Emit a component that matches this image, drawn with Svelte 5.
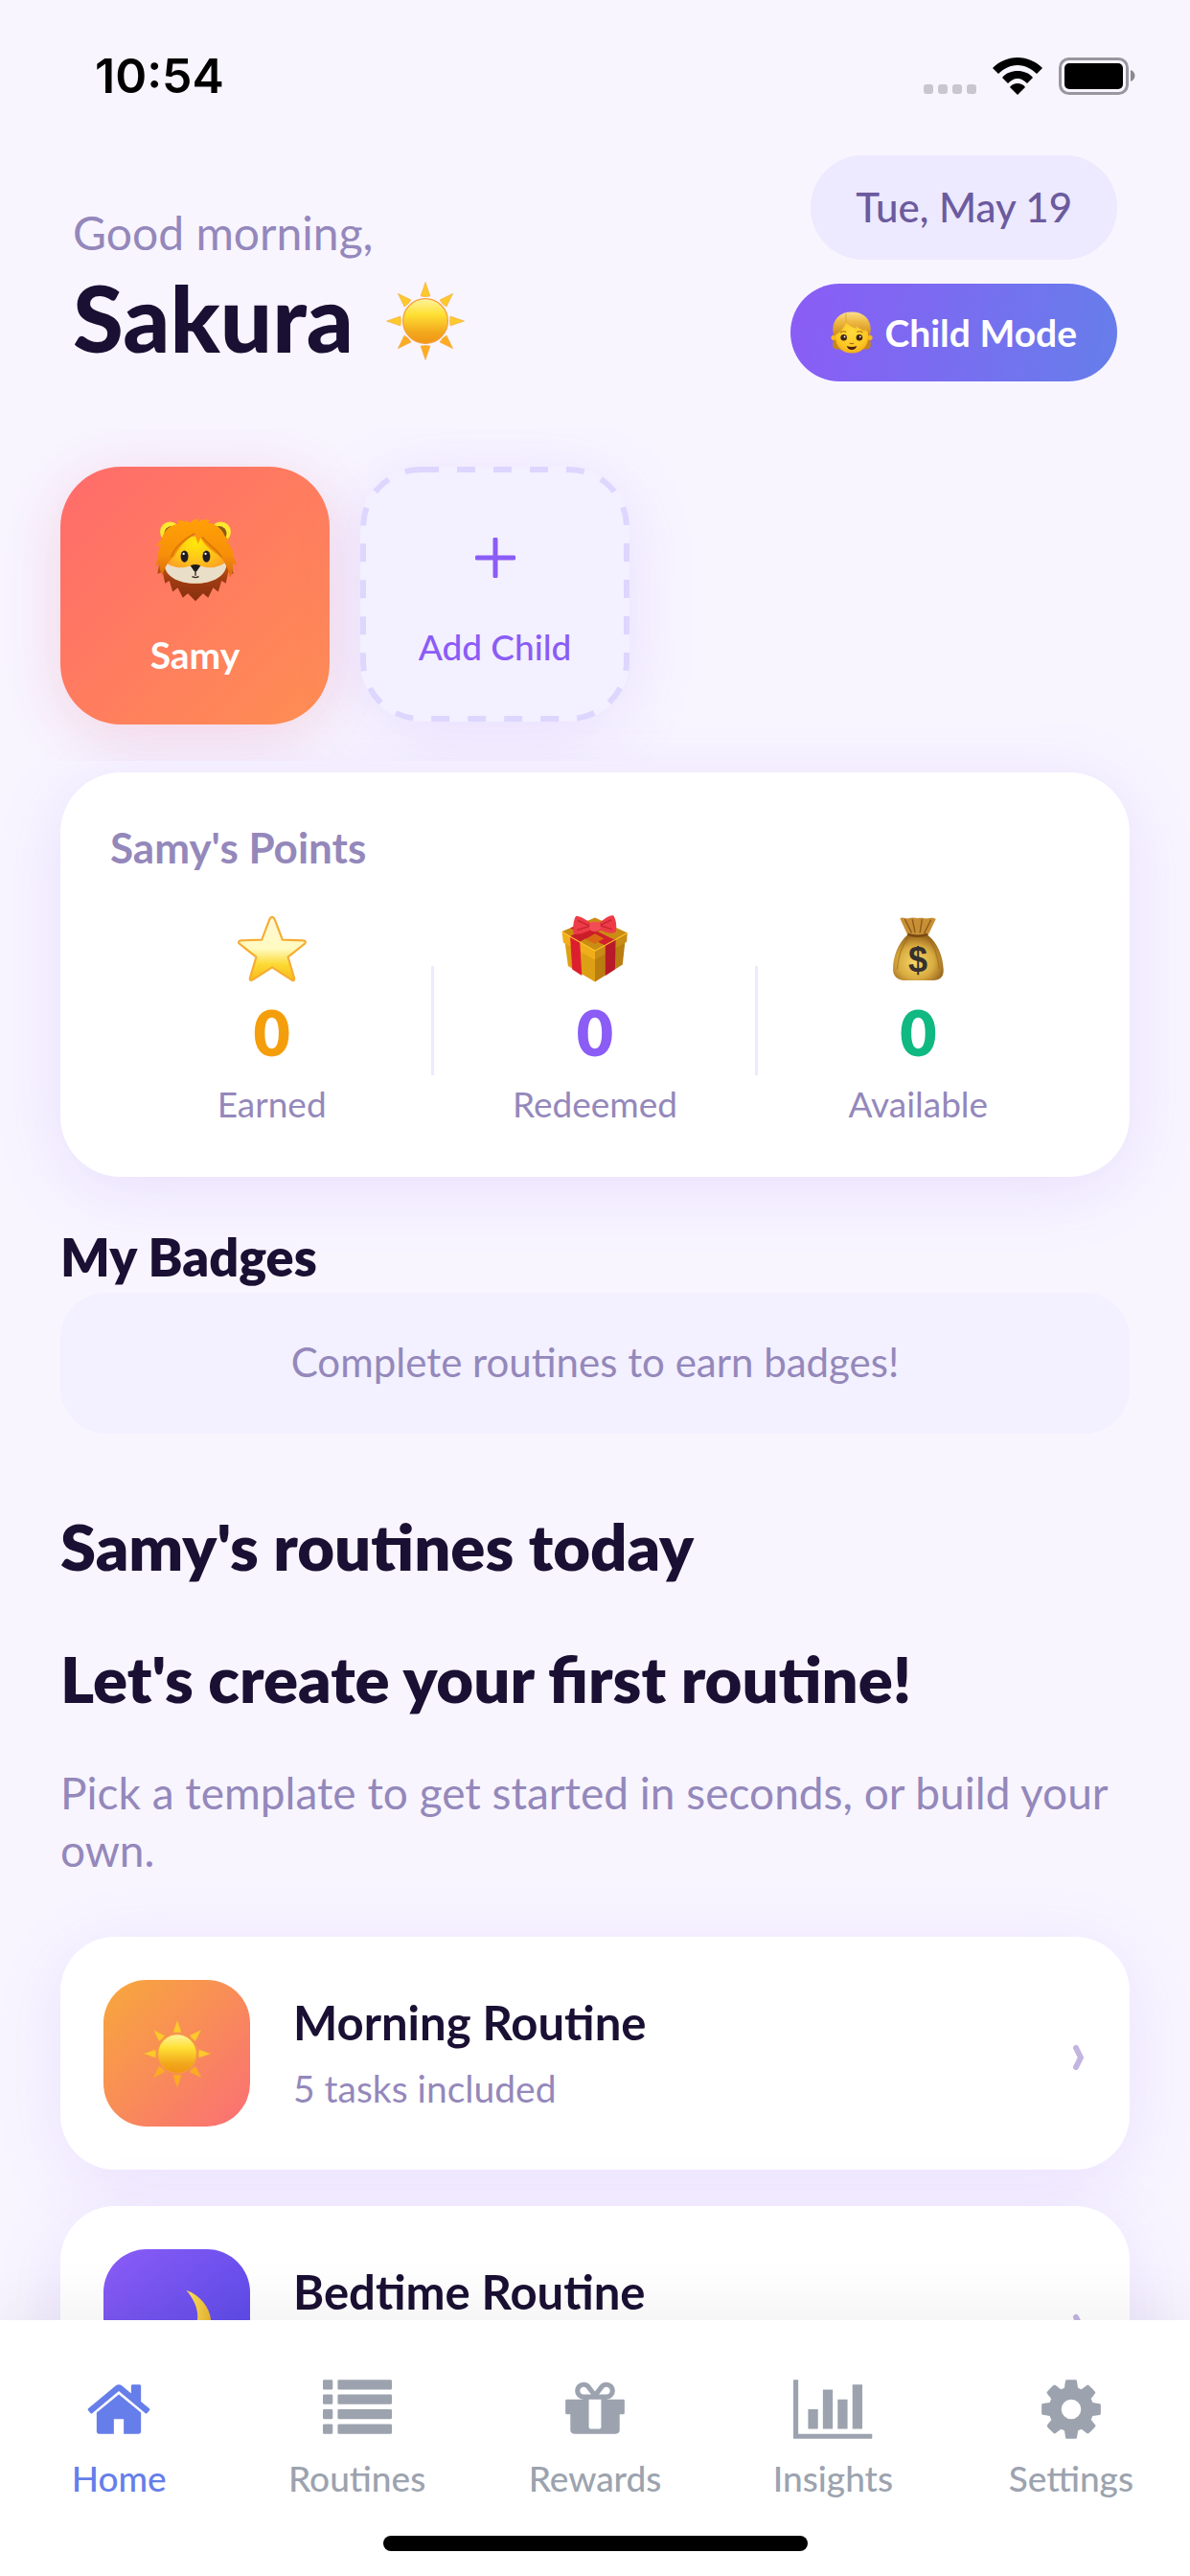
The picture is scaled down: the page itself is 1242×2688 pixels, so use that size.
<script>
  let activeTab = $state('Home');

  const stats = [
    { icon: 'star', value: 0, label: 'Earned', tone: 'amber' },
    { icon: 'gift', value: 0, label: 'Redeemed', tone: 'violet' },
    { icon: 'bag', value: 0, label: 'Available', tone: 'green' }
  ];

  const routines = [
    { icon: 'sun', title: 'Morning Routine', info: '5 tasks included', tone: 'sunrise' },
    { icon: 'moon', title: 'Bedtime Routine', info: '5 tasks included', tone: 'night' }
  ];

  const tabs = [
    {
      name: 'Home',
      width: 1792,
      path: 'M1472 992v480q0 26-19 45t-45 19h-384v-384h-256v384h-384q-26 0-45-19t-19-45v-480q0-1 .5-3t.5-3l575-474 575 474q1 2 1 6zm223-69l-62 74q-8 9-21 11h-3q-13 0-21-7l-692-577-692 577q-12 8-24 7-13-2-21-11l-62-74q-8-10-7-23.5t11-21.5l719-599q32-26 76-26t76 26l244 204v-195q0-14 9-23t23-9h192q14 0 23 9t9 23v408l219 182q10 8 11 21.5t-7 23.5z'
    },
    {
      name: 'Routines',
      width: 1792,
      path: 'M32 1280h192q32 0 32 32v192q0 32-32 32h-192q-32 0-32-32v-192q0-32 32-32zm0-384h192q32 0 32 32v192q0 32-32 32h-192q-32 0-32-32v-192q0-32 32-32zm0-384h192q32 0 32 32v192q0 32-32 32h-192q-32 0-32-32v-192q0-32 32-32zm0-384h192q32 0 32 32v192q0 32-32 32h-192q-32 0-32-32v-192q0-32 32-32zm384 1152h1344q32 0 32 32v192q0 32-32 32h-1344q-32 0-32-32v-192q0-32 32-32zm0-384h1344q32 0 32 32v192q0 32-32 32h-1344q-32 0-32-32v-192q0-32 32-32zm0-384h1344q32 0 32 32v192q0 32-32 32h-1344q-32 0-32-32v-192q0-32 32-32zm0-384h1344q32 0 32 32v192q0 32-32 32h-1344q-32 0-32-32v-192q0-32 32-32z'
    },
    {
      name: 'Rewards',
      width: 1792,
      path: 'M1056 1356v-716h-320v716q0 25 18 38.5t46 13.5h192q28 0 46-13.5t18-38.5zm-456-844h195l-126-161q-26-31-69-31-40 0-68 28t-28 68 28 68 68 28zm688-96q0-40-28-68t-68-28q-43 0-69 31l-125 161h194q40 0 68-28t28-68zm376 256v320q0 14-9 23t-23 9h-96v416q0 40-28 68t-68 28h-1088q-40 0-68-28t-28-68v-416h-96q-14 0-23-9t-9-23v-320q0-14 9-23t23-9h440q-93 0-158.5-65.5t-65.5-158.5 65.5-158.5 158.5-65.5q107 0 168 77l128 165 128-165q61-77 168-77 93 0 158.5 65.5t65.5 158.5-65.5 158.5-158.5 65.5h440q14 0 23 9t9 23z'
    },
    {
      name: 'Insights',
      width: 2048,
      path: 'M640 896v512h-256v-512h256zm384-512v1024h-256v-1024h256zm1024 1152v128h-2048v-1536h128v1408h1920zm-640-896v768h-256v-768h256zm384-384v1152h-256v-1152h256z'
    },
    {
      name: 'Settings',
      width: 1792,
      path: 'M1152 896q0-106-75-181t-181-75-181 75-75 181 75 181 181 75 181-75 75-181zm512-109v222q0 12-8 23t-20 13l-185 28q-19 54-39 91 35 50 107 138 10 12 10 25t-9 23q-27 37-99 108t-94 71q-12 0-26-9l-138-108q-44 23-91 38-16 136-29 186-7 28-36 28h-222q-14 0-24.5-8.5t-11.5-21.5l-28-184q-49-16-90-37l-141 107q-10 9-25 9-14 0-25-11-126-114-165-168-7-10-7-23 0-12 8-23 15-21 51-66.5t54-70.5q-27-50-41-99l-183-27q-13-2-21-12.5t-8-23.5v-222q0-12 8-23t19-13l186-28q14-46 39-92-40-57-107-138-10-12-10-24 0-10 9-23 26-36 98.5-107.5t94.5-71.5q13 0 26 10l138 107q44-23 91-38 16-136 29-186 7-28 36-28h222q14 0 24.5 8.5t11.5 21.5l28 184q49 16 90 37l142-107q9-9 24-9 13 0 25 10 129 119 165 170 7 8 7 22 0 12-8 23-15 21-51 66.5t-54 70.5q26 50 41 98l183 28q13 2 21 12.5t8 23.5z'
    }
  ];
</script>

{#snippet emoji(name)}
  <svg class="emoji" viewBox="0 0 100 100" aria-hidden="true">
    {#if name === 'sun'}
      {#each [0, 45, 90, 135, 180, 225, 270, 315] as angle}
        <path d="M50 5l5.500 16q-5.500 1.500-11 0z" fill={angle > 90 && angle < 270 ? '#fdab22' : '#fdc92c'} stroke="#f3a63a" stroke-width=".6" transform="rotate({angle} 50 50)" />
      {/each}
      <circle cx="50" cy="50" r="26" fill="url(#sun-fill)" stroke="#f4a03c" stroke-width="1.400" />
    {:else if name === 'moon'}
      <path d="M62 6C84 14 97 34 95 54 93 80 70 96 44 94 26 93 12 84 6 70c24 14 56 8 68-14 8-18 0-36-12-50z" fill="url(#moon-fill)" />
    {:else if name === 'star'}
      <path d="M50 4c2 0 3 2 4 4l11 29 30 1c4 0 4 3 2 5L73 62l9 30c1 4-2 5-4 3L50 77 22 95c-3 2-5 0-4-3l9-30L3 43c-3-2-1-5 2-5l30-1L46 8c1-2 2-4 4-4z" fill="url(#star-fill)" stroke="#f5ad33" stroke-width="3" stroke-linejoin="round" />
    {:else if name === 'gift'}
      <path d="M6 38l44 25v35L11 75z" fill="#dda014" />
      <path d="M94 36L50 63v35l40-25z" fill="#b97d10" />
      <path d="M2 25l48-20 47 22-47 28z" fill="#c98d13" />
      <path d="M2 25l48 27v14L4 41z" fill="#f1ae1b" />
      <path d="M97 26L50 52v14l46-26z" fill="#c98c14" />
      <path d="M14 20l15-7 51 25-14 8z" fill="#d3202c" />
      <path d="M14 32l14 8 3 49-14-9z" fill="#dc1f2f" />
      <path d="M65 44l15-9-1 45-14 9z" fill="#b81a29" />
      <path d="M14 32l35-19 14 7-35 20zM50 42l-14-7 13-9 15 7z" fill="#c91e2a" />
      <path d="M36 36l14-8 13 7-13 8z" fill="#d96a13" />
      <path d="M3 26l47 27 47-26" fill="none" stroke="#ffc62d" stroke-width="1.500" />
      <path d="M46 14C36 7 27 1 22 3c-4 7-4 18-3 25 8 3 18-2 27-6zM54 14C64 6 72 0 77 2c4 7 5 17 3 24-8 4-17-1-26-5z" fill="#ee3c47" />
      <path d="M25 9l18 8-19 6M74 8l-17 8 18 6" fill="none" stroke="#c92533" stroke-width="2" />
      <rect x="42" y="11" width="16" height="14" rx="6" fill="#f24d55" />
    {:else if name === 'bag'}
      <path d="M35 30c-14 12-21 32-21 49 0 13 8 17 19 17h36c13 0 19-5 18-17-1-18-8-37-23-49z" fill="url(#bag-fill)" />
      <path d="M24 6c5-3 8 1 12 0 6-2 10-1 14 0 5-2 10 1 14 0s9-1 12 1L65 30q-15 5-30 0z" fill="#c79035" />
      <path d="M31 7l10 20M42 7l4 20M56 7l-3 20M69 8L59 28" stroke="#8f5c1b" stroke-width="2" fill="none" />
      <path d="M35 29q15 5 29 0" stroke="#78480f" stroke-width="3.500" fill="none" />
      <path d="M36 34C27 46 21 62 20 80M64 34c10 11 15 28 17 45" stroke="#9c6a1c" stroke-width="2" fill="none" opacity=".6" />
      <text class="dollar" x="50" y="83" text-anchor="middle">$</text>
    {:else if name === 'lion'}
      <path d="M8 45L5 66l6-3 3 14 5-3 4 13 6-5 6 12 6-5 9 9 9-9 6 5 6-12 6 5 4-13 5 3 3-14 6 3-3-21z" fill="url(#mane-fill)" />
      <circle cx="20" cy="16" r="12" fill="#ffe92f" />
      <circle cx="80" cy="16" r="12" fill="#ffe92f" />
      <circle cx="22" cy="18" r="9" fill="#8b5a1a" />
      <circle cx="78" cy="18" r="9" fill="#8b5a1a" />
      <ellipse cx="50" cy="49" rx="37" ry="28" fill="url(#lion-face)" />
      <path d="M13 51c6 5 15 8 24 7l13-3 13 3c9 1 18-2 24-7 1 17-16 26-37 26S12 68 13 51z" fill="#e9dfc9" />
      <path d="M37 1l7 4c2-3 6-4 10-5l-2 4c6-3 11-3 16-2l-4 3c11 1 18 8 21 16l7 6-6-1c6 6 9 13 9 19l4 10-5-2c1 6 0 12-3 17-2-10-6-19-13-26-9-6-17-12-22-21l-3 7-4-12c-12 9-18 16-24 27-7 5-12 14-14 22-3-4-4-9-4-14l-5 4 4-11c-1-8 2-12 4-15l-8 2 8-8c2-9 8-17 21-19l-3-3c5-1 9 0 13 2z" fill="url(#hair-lion)" />
      <path d="M49 18C36 25 26 33 21 46M58 22c8 10 18 15 23 24" stroke="#d87908" stroke-width="2" fill="none" />
      <ellipse cx="37" cy="45" rx="4.500" ry="7" fill="#211b22" />
      <ellipse cx="63" cy="45" rx="4.500" ry="7" fill="#211b22" />
      <circle cx="36" cy="42" r="1.300" fill="#fff" />
      <circle cx="62" cy="42" r="1.300" fill="#fff" />
      <path d="M44 56q6-3 12 0l-4 6q-2 2-4 0z" fill="#1d191c" />
      <path d="M50 62v6M46 69q4 2 8 0" stroke="#3a2a22" stroke-width="1.600" fill="none" />
    {:else if name === 'child'}
      <path d="M7 45l-2 38q3 7 12 7h66q9 0 12-7l-2-38z" fill="#c4851c" />
      <circle cx="7" cy="62" r="6" fill="#f8b91d" />
      <circle cx="93" cy="62" r="6" fill="#f8b91d" />
      <path d="M50 16C24 16 11 34 11 60c0 24 17 39 39 39s39-15 39-39c0-26-13-44-39-44z" fill="url(#child-face)" />
      <path d="M50 1C22 1 5 18 5 44l2 13c14-6 24-16 30-30 7 7 16 11 25 14l-3-7c8 7 18 11 24 13l-3-6c6 5 10 10 13 16l2-14C95 18 78 1 50 1z" fill="url(#hair-fill)" />
      <path d="M37 27c-1-8-2-14 0-22" stroke="#d8a338" stroke-width="2" fill="none" />
      <circle cx="31" cy="62" r="7.500" fill="#3f2412" />
      <circle cx="68" cy="62" r="7.500" fill="#3f2412" />
      <circle cx="33" cy="60" r="2" fill="#fff" />
      <circle cx="70" cy="60" r="2" fill="#fff" />
      <path d="M23 50q7-5 14-1M62 49q7-4 14 1M45 75q5 3 10 0" stroke="#ad6c0c" stroke-width="2.500" fill="none" />
      <path d="M38 82q12 4 24 0-3 9-12 9t-12-9z" fill="#4a1c12" />
    {/if}
  </svg>
{/snippet}

<!-- gradients shared by the emoji drawings -->
<svg class="defs" aria-hidden="true">
  <defs>
    <linearGradient id="sun-fill" x1="0" y1="0" x2="0" y2="1">
      <stop offset="0" stop-color="#fff3a0" />
      <stop offset=".35" stop-color="#ffe034" />
      <stop offset=".75" stop-color="#f2a81c" />
      <stop offset="1" stop-color="#f09514" />
    </linearGradient>
    <linearGradient id="moon-fill" x1="0" y1="0" x2="1" y2="0">
      <stop offset="0" stop-color="#e0a92b" />
      <stop offset=".7" stop-color="#fbdc58" />
      <stop offset="1" stop-color="#e9b52e" />
    </linearGradient>
    <linearGradient id="star-fill" x1="0" y1="0" x2="0" y2="1">
      <stop offset="0" stop-color="#fff7d6" />
      <stop offset=".5" stop-color="#fffbc0" />
      <stop offset=".75" stop-color="#fcd932" />
      <stop offset="1" stop-color="#f9b81c" />
    </linearGradient>
    <radialGradient id="bag-fill" cx=".45" cy=".6" r=".6">
      <stop offset="0" stop-color="#f3d866" />
      <stop offset=".6" stop-color="#d9ab40" />
      <stop offset="1" stop-color="#98651b" />
    </radialGradient>
    <linearGradient id="mane-fill" x1="0" y1="0" x2="0" y2="1">
      <stop offset="0" stop-color="#d96a0b" />
      <stop offset=".5" stop-color="#a23c12" />
      <stop offset="1" stop-color="#86300f" />
    </linearGradient>
    <linearGradient id="hair-lion" x1="0" y1="0" x2="0" y2="1">
      <stop offset="0" stop-color="#ffa105" />
      <stop offset=".6" stop-color="#f79009" />
      <stop offset="1" stop-color="#d9690c" />
    </linearGradient>
    <radialGradient id="lion-face" cx=".5" cy=".15" r=".75">
      <stop offset="0" stop-color="#ffe80a" />
      <stop offset=".5" stop-color="#ffc21b" />
      <stop offset="1" stop-color="#fb8e25" />
    </radialGradient>
    <radialGradient id="child-face" cx=".5" cy=".4" r=".65">
      <stop offset="0" stop-color="#ffdb3c" />
      <stop offset=".7" stop-color="#fcc724" />
      <stop offset="1" stop-color="#f0a51b" />
    </radialGradient>
    <linearGradient id="hair-fill" x1="0" y1="0" x2="0" y2="1">
      <stop offset="0" stop-color="#fbdf8e" />
      <stop offset=".4" stop-color="#efbb45" />
      <stop offset="1" stop-color="#cf8c1c" />
    </linearGradient>
  </defs>
</svg>

<div class="app">
  <div class="status-bar">
    <span class="time">10:54</span>
    <div class="status-icons">
      <svg class="dots" viewBox="0 0 55 10" aria-hidden="true">
        <rect width="10" height="10" rx="3" />
        <rect x="15" width="10" height="10" rx="3" />
        <rect x="30" width="10" height="10" rx="3" />
        <rect x="45" width="10" height="10" rx="3" />
      </svg>
      <svg class="wifi" viewBox="0 0 52 39" aria-hidden="true">
        <path d="M26 0C36 0 45 4 52 11L46 17C41 12 34 8 26 8S11 12 6 17L0 11C7 4 16 0 26 0z" />
        <path d="M26 14c6 0 12 2 16 7l-6 6c-3-3-6-5-10-5s-7 2-10 5l-6-6c4-5 10-7 16-7z" />
        <path d="M26 27c3 0 6 1 8 4l-8 8-8-8c2-3 5-4 8-4z" />
      </svg>
      <svg class="battery" viewBox="0 0 80 39" aria-hidden="true">
        <rect x="1.500" y="1.500" width="70" height="36" rx="9" fill="none" stroke="#99969f" stroke-width="3" />
        <rect x="6" y="6" width="61" height="27" rx="5" />
        <path d="M75 13c6 2 6 10 0 12z" fill="#8b8890" />
      </svg>
    </div>
  </div>

  <header class="header">
    <div class="greeting">
      <p class="hello">Good morning,</p>
      <h1>Sakura {@render emoji('sun')}</h1>
    </div>
    <div class="header-actions">
      <span class="date">Tue, May 19</span>
      <button class="child-mode" type="button">{@render emoji('child')} Child Mode</button>
    </div>
  </header>

  <main class="content">
    <div class="children">
      <button class="child selected" type="button">
        {@render emoji('lion')}
        <span>Samy</span>
      </button>
      <button class="child add" type="button">
        <svg class="outline" aria-hidden="true"><rect x="3" y="3" rx="60" /></svg>
        <svg class="plus" viewBox="0 0 42 42" aria-hidden="true"><path d="M21 2v38M2 21h38" /></svg>
        <span>Add Child</span>
      </button>
    </div>

    <section class="points">
      <h2>Samy's Points</h2>
      <div class="stats">
        {#each stats as stat}
          <div class="stat">
            {@render emoji(stat.icon)}
            <strong class={stat.tone}>{stat.value}</strong>
            <span>{stat.label}</span>
          </div>
        {/each}
      </div>
    </section>

    <section class="badges">
      <h2>My Badges</h2>
      <p>Complete routines to earn badges!</p>
    </section>

    <section class="routines">
      <h2>Samy's routines today</h2>
      <h2>Let's create your first routine!</h2>
      <p class="intro">Pick a template to get started in seconds, or build your own.</p>
      <div class="routine-list">
        {#each routines as routine}
          <button class="routine" type="button">
            <span class="tile {routine.tone}">{@render emoji(routine.icon)}</span>
            <span class="routine-text">
              <strong>{routine.title}</strong>
              <small>{routine.info}</small>
            </span>
            <svg class="chevron" viewBox="0 0 14 28" aria-hidden="true"><path d="M3 4l5 10-5 10" /></svg>
          </button>
        {/each}
      </div>
    </section>
  </main>

  <nav class="tab-bar">
    <div class="tabs">
      {#each tabs as tab}
        <button class="tab" class:active={activeTab === tab.name} type="button" onclick={() => (activeTab = tab.name)}>
          <svg viewBox="0 0 {tab.width} 1792" aria-hidden="true"><path d={tab.path} /></svg>
          <span>{tab.name}</span>
        </button>
      {/each}
    </div>
    <div class="home-indicator"></div>
  </nav>
</div>

<style>
  :global(body) {
    margin: 0;
    background: #f8f5ff;
  }

  .app {
    display: flex;
    flex-direction: column;
    height: 100vh;
    overflow: hidden;
    background: #f8f5ff;
    color: #1a1033;
    font-family: Lato, "Open Sans", sans-serif;
  }

  h1, h2, p {
    margin: 0;
  }

  button {
    margin: 0;
    border: 0;
    padding: 0;
    background: none;
    color: inherit;
    font: inherit;
    cursor: pointer;
  }

  svg {
    display: block;
    flex: none;
  }

  .defs {
    position: absolute;
    width: 0;
    height: 0;
  }

  .dollar {
    font: 700 50px "Liberation Sans", sans-serif;
    fill: #37302f;
  }

  .status-bar {
    display: flex;
    flex: none;
    justify-content: space-between;
    align-items: flex-end;
    height: 99px;
    padding: 0 57px 33px 99px;
    color: #000;
  }

  .time {
    font: 600 50px/40px Inter, sans-serif;
  }

  .status-icons {
    display: flex;
    align-items: flex-end;
    gap: 17px;
  }

  .dots {
    width: 55px;
    height: 12px;
    fill: #c9c6d0;
  }

  .wifi {
    width: 52px;
    height: 39px;
  }

  .battery {
    width: 80px;
    height: 39px;
  }

  .header {
    display: flex;
    flex: none;
    justify-content: space-between;
    padding: 30px 76px 51px;
  }

  .greeting {
    padding-top: 51px;
  }

  .hello {
    margin-bottom: 4px;
    color: #9488bb;
    font-size: 48px;
    line-height: 60px;
  }

  h1 {
    display: flex;
    align-items: center;
    gap: 30px;
    font-size: 96px;
    font-weight: 900;
    line-height: 108px;
  }

  h1 .emoji {
    width: 90px;
    height: 90px;
    margin-top: 8px;
  }

  .header-actions {
    display: flex;
    flex-direction: column;
    align-items: flex-end;
    gap: 25px;
  }

  .date {
    padding: 27px 47px;
    border-radius: 60px;
    background: #ede9fe;
    color: #6b5b9e;
    font-size: 42px;
    font-weight: 500;
    line-height: 55px;
  }

  .child-mode {
    display: flex;
    align-items: center;
    gap: 12px;
    padding: 27px 42px;
    border-radius: 60px;
    background: linear-gradient(100deg, #8b5cf6, #667eea);
    color: #fff;
    font-size: 39px;
    font-weight: 700;
    line-height: 48px;
  }

  .child-mode .emoji {
    width: 44px;
    height: 48px;
  }

  .content {
    flex: 1;
    min-height: 0;
    overflow: hidden;
  }

  .children {
    display: flex;
    align-items: flex-start;
    gap: 32px;
    padding: 38px 63px;
    overflow: hidden;
  }

  .child {
    display: flex;
    flex-direction: column;
    align-items: center;
    width: 281px;
    border-radius: 63px;
    box-shadow: 0 12px 72px rgba(139, 92, 246, .14);
    font-size: 39px;
    font-weight: 700;
    line-height: 48px;
  }

  .child.selected {
    gap: 30px;
    padding: 54px 0 49px;
    background: linear-gradient(135deg, #ff6b6b, #ff8e53);
    box-shadow: 0 12px 60px rgba(255, 107, 107, .18), 0 12px 72px rgba(139, 92, 246, .06);
    color: #fff;
  }

  .child .emoji {
    width: 88px;
    height: 88px;
  }

  .child.add {
    position: relative;
    gap: 48px;
    padding: 74px 0 54px;
    background: #f3f0ff;
    color: #8b5cf6;
    font-size: 37px;
    font-weight: 500;
  }

  .outline {
    position: absolute;
    inset: 0;
    width: 100%;
    height: 100%;
  }

  .outline rect {
    width: calc(100% - 6px);
    height: calc(100% - 6px);
    fill: none;
    stroke: #ddd6fe;
    stroke-width: 6;
    stroke-dasharray: 19 19;
  }

  .plus {
    width: 42px;
    height: 42px;
  }

  .plus path {
    stroke: #8b5cf6;
    stroke-width: 5;
    stroke-linecap: round;
  }

  .points {
    margin: 12px 63px 0;
    padding: 54px 52px 52px;
    border-radius: 63px;
    background: #fff;
    box-shadow: 0 12px 72px rgba(139, 92, 246, .14);
  }

  .points h2 {
    margin-bottom: 46px;
    color: #9488bb;
    font-size: 44px;
    font-weight: 700;
    line-height: 48px;
  }

  .stats {
    display: flex;
    align-items: center;
  }

  .stat {
    position: relative;
    display: flex;
    flex: 1;
    flex-direction: column;
    align-items: center;
    gap: 12px;
  }

  .stat + .stat::before {
    content: "";
    position: absolute;
    top: 54px;
    left: -2px;
    width: 3px;
    height: 114px;
    background: #ede9fe;
  }

  .stat .emoji {
    width: 72px;
    height: 72px;
  }

  .stat strong {
    font-size: 66px;
    font-weight: 800;
    line-height: 78px;
  }

  .stat span {
    color: #9488bb;
    font-size: 37px;
    line-height: 48px;
  }

  .amber {
    color: #f59e0b;
  }

  .violet {
    color: #8b5cf6;
  }

  .green {
    color: #10b981;
  }

  .badges {
    margin: 54px 63px 0;
  }

  .badges h2 {
    margin-bottom: 7px;
    font-size: 54px;
    font-weight: 800;
    line-height: 60px;
  }

  .badges p {
    padding: 47px 48px 49px;
    border-radius: 48px;
    background: #f3f0ff;
    color: #9488bb;
    font-size: 42px;
    line-height: 51px;
    text-align: center;
  }

  .routines {
    margin: 78px 63px 0;
  }

  .routines h2 {
    margin-bottom: 60px;
    font-size: 67px;
    font-weight: 800;
    line-height: 78px;
  }

  .routines h2 + h2 {
    margin-bottom: 51px;
  }

  .intro {
    margin-bottom: 60px;
    color: #9488bb;
    font-size: 46px;
    line-height: 60px;
  }

  .routine-list {
    display: flex;
    flex-direction: column;
    gap: 38px;
  }

  .routine {
    display: flex;
    align-items: center;
    gap: 45px;
    padding: 45px;
    border-radius: 57px;
    background: #fff;
    box-shadow: 0 12px 72px rgba(139, 92, 246, .12);
    text-align: left;
  }

  .tile {
    display: flex;
    justify-content: center;
    align-items: center;
    width: 153px;
    height: 153px;
    border-radius: 45px;
  }

  .tile .emoji {
    width: 78px;
    height: 78px;
  }

  .sunrise {
    background: linear-gradient(135deg, #f7a83c, #fa6f75);
  }

  .night {
    background: linear-gradient(135deg, #8b5cf6, #4f46e5);
  }

  .routine-text {
    display: flex;
    flex: 1;
    flex-direction: column;
    gap: 12px;
  }

  .routine-text strong {
    font-size: 49px;
    font-weight: 700;
    line-height: 60px;
  }

  .routine-text small {
    color: #9488bb;
    font-size: 39px;
    line-height: 54px;
  }

  .chevron {
    width: 14px;
    height: 28px;
    margin: 8px 0 0;
  }

  .chevron path {
    fill: none;
    stroke: #c4b5e0;
    stroke-width: 6;
    stroke-linecap: round;
    stroke-linejoin: round;
  }

  .tab-bar {
    position: relative;
    flex: none;
    padding: 57px 0 26px;
    background: #fff;
    box-shadow: 0 -12px 60px rgba(0, 0, 0, .06);
  }

  .tabs {
    display: flex;
  }

  .tab {
    display: flex;
    flex: 1;
    flex-direction: column;
    align-items: center;
    gap: 12px;
    color: #9ca3af;
    font-size: 37px;
    font-weight: 500;
    line-height: 48px;
  }

  .tab.active {
    color: #667eea;
  }

  .tab svg {
    height: 72px;
    fill: currentColor;
  }

  .home-indicator {
    width: 443px;
    height: 16px;
    margin: 36px auto 0;
    border-radius: 8px;
    background: #000;
  }
</style>
